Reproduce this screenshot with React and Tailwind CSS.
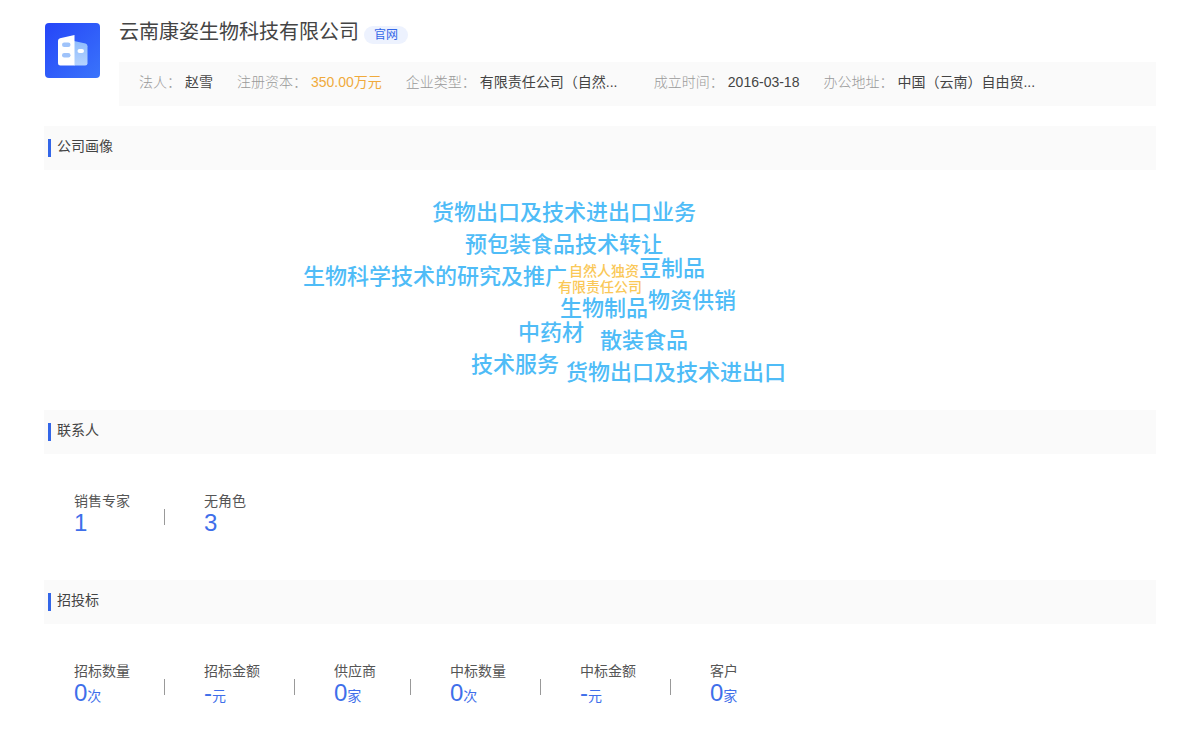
const companyInfo = [
  { label: "法人", value: "赵雪" },
  { label: "注册资本", value: "350.00万元", highlight: true },
  { label: "企业类型", value: "有限责任公司（自然...", wide: true },
  { label: "成立时间", value: "2016-03-18" },
  { label: "办公地址", value: "中国（云南）自由贸...", wide: true },
];

// x / y: start and middle of the word, measured from the middle of the cloud's top edge
const cloudWords = [
  { text: "货物出口及技术进出口业务", x: -168, y: 43 },
  { text: "预包装食品技术转让", x: -135, y: 75 },
  { text: "生物科学技术的研究及推广", x: -297, y: 107 },
  { text: "自然人独资", x: -31, y: 101, small: true },
  { text: "有限责任公司", x: -42, y: 117, small: true },
  { text: "豆制品", x: 39, y: 99 },
  { text: "物资供销", x: 48, y: 131 },
  { text: "生物制品", x: -40, y: 139 },
  { text: "中药材", x: -82, y: 163 },
  { text: "散装食品", x: 0, y: 171 },
  { text: "技术服务", x: -129, y: 195 },
  { text: "货物出口及技术进出口", x: -34, y: 203 },
];

const contacts = [
  { label: "销售专家", value: "1" },
  { label: "无角色", value: "3" },
];

const bids = [
  { label: "招标数量", value: "0", unit: "次" },
  { label: "招标金额", value: "-", unit: "元" },
  { label: "供应商", value: "0", unit: "家" },
  { label: "中标数量", value: "0", unit: "次" },
  { label: "中标金额", value: "-", unit: "元" },
  { label: "客户", value: "0", unit: "家" },
];

const CompanyLogo = () => (
  <svg viewBox="0 0 55 55" className="size-[55px] shrink-0" aria-hidden="true">
    <defs>
      <linearGradient id="logoBg" x1="0" y1="0" x2="1" y2="1">
        <stop offset="0" stopColor="#2545f8" />
        <stop offset="1" stopColor="#3a74fb" />
      </linearGradient>
      <linearGradient id="logoSide" x1="0" y1="0" x2="0" y2="1">
        <stop offset="0" stopColor="#8fbcfc" />
        <stop offset="1" stopColor="#b5d3fe" />
      </linearGradient>
    </defs>
    <rect width="55" height="55" rx="4" fill="url(#logoBg)" />
    <path d="M29 18l11.5 2.6q2 .6 2 2.6v17q0 2.3-2.3 2.3H29z" fill="url(#logoSide)" />
    <path d="M15 15.3l14.500-3.300v30.500H15.300q-2.300 0-2.300-2.300V17.800q0-2 2-2.500z" fill="#fff" />
    <rect x="17" y="19.5" width="8.5" height="4.5" rx="2.2" fill="#9fc3fa" />
    <rect x="17" y="30" width="8.5" height="4.5" rx="2.2" fill="#9fc3fa" />
    <rect x="32.5" y="26" width="6.5" height="4" rx="2" fill="#fff" />
  </svg>
);

const Header = () => (
  <header className="flex gap-[19px] pl-px">
    <CompanyLogo />
    <div className="min-w-0 flex-1">
      <div className="-mt-[3px] flex h-6 items-center gap-[5px]">
        <h1 className="text-[20px] leading-6 text-[#444]">云南康姿生物科技有限公司</h1>
        <a
          href="#website"
          className="mt-1.5 rounded-full bg-[#edf2fe] px-2.5 text-xs leading-[18px] text-[#3366e8]"
        >
          官网
        </a>
      </div>
      <dl className="mt-[18px] flex flex-wrap gap-x-6 bg-[#fafafa] px-5 pt-[9px] pb-[13px] text-sm leading-[22px]">
        {companyInfo.map((item) => (
          <div key={item.label} className="flex gap-1">
            <dt className="font-light text-[#999]">{item.label}：</dt>
            <dd
              className={`whitespace-nowrap ${item.highlight ? "text-[#f0aa3c]" : "text-[#444]"} ${
                item.wide ? "w-[150px]" : ""
              }`}
            >
              {item.value}
            </dd>
          </div>
        ))}
      </dl>
    </div>
  </header>
);

const Section = ({ title, children }) => (
  <section>
    <div className="flex h-11 items-center gap-1.5 bg-[#fafafa] pl-1">
      <span className="h-[18px] w-[3px] bg-[#3366e8]"></span>
      <h2 className="pb-1 text-sm leading-5 text-[#444]">{title}</h2>
    </div>
    {children}
  </section>
);

const WordCloud = () => (
  <div className="relative h-60">
    {cloudWords.map((word) => (
      <span
        key={word.text}
        className={`absolute left-1/2 -translate-y-1/2 font-medium whitespace-nowrap ${
          word.small
            ? "text-sm leading-4 text-[#fac858]"
            : "text-[22px] leading-8 text-[#4fbcf7]"
        }`}
        style={{ marginLeft: word.x, top: word.y }}
      >
        {word.text}
      </span>
    ))}
  </div>
);

const StatList = ({ items }) => (
  <ul className="flex h-[126px] pt-[37px] pl-[30px]">
    {items.map((item, index) => (
      <li key={item.label} className="flex">
        {index > 0 && <span className="mt-[18px] mr-[39px] ml-[34px] h-4 w-px bg-[#999]"></span>}
        <div>
          <p className="text-sm leading-5 text-[#555]">{item.label}</p>
          <p className="text-2xl leading-6 text-[#3f6fea]">
            {item.value}
            {item.unit && <span className="text-sm leading-5">{item.unit}</span>}
          </p>
        </div>
      </li>
    ))}
  </ul>
);

const App = () => (
  <main className="bg-white px-11 pt-[23px] font-['Liberation_Sans','Noto_Sans_CJK_SC',sans-serif]">
    <Header />
    <div className="mt-5">
      <Section title="公司画像">
        <WordCloud />
      </Section>
      <Section title="联系人">
        <StatList items={contacts} />
      </Section>
      <Section title="招投标">
        <StatList items={bids} />
      </Section>
    </div>
  </main>
);

export default App;
